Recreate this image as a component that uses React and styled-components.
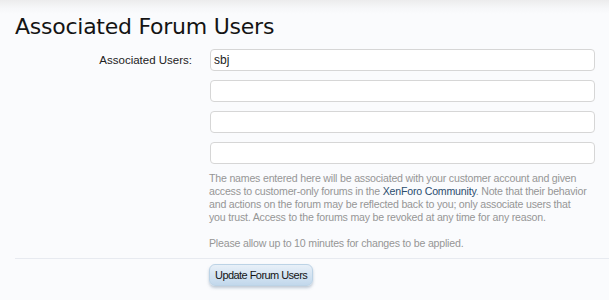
import React from "react";
import styled, { createGlobalStyle } from "styled-components";

const GlobalStyle = createGlobalStyle`
  html, body {
    margin: 0;
    padding: 0;
    background: #fafbfd;
  }
  body {
    font-family: "Liberation Sans", Arial, sans-serif;
    color: #141414;
  }
`;

const App = () => {
  const users = ["sbj", "", "", ""];
  return (
    <Page>
      <GlobalStyle />
      <TitleBar>
        <Title>Associated Forum Users</Title>
      </TitleBar>
      <Form>
        <FieldRow>
          <Label>Associated Users:</Label>
          <Controls>
            {users.map((u, i) => (
              <TextBox key={i} defaultValue={u} />
            ))}
            <Explain>
              <p>
                The names entered here will be associated with your customer account and given
                <br />
                access to customer-only forums in the <Link href="#">XenForo Community</Link>. Note
                that their behavior
                <br />
                and actions on the forum may be reflected back to you; only associate users that
                <br />
                you trust. Access to the forums may be revoked at any time for any reason.
              </p>
              <p>Please allow up to 10 minutes for changes to be applied.</p>
            </Explain>
          </Controls>
        </FieldRow>
        <SubmitRow>
          <Spacer />
          <Button type="button">Update Forum Users</Button>
        </SubmitRow>
      </Form>
    </Page>
  );
};

export default App;

const Page = styled.div`
  width: 609px;
  height: 300px;
  overflow: hidden;
  background: linear-gradient(#ececed 0, #f6f7f9 8px, #fafbfd 14px);
`;
const TitleBar = styled.div`
  padding: 14px 15px 0;
  height: 30px;
`;
const Title = styled.h1`
  margin: 0;
  font-family: "DejaVu Sans", Verdana, sans-serif;
  font-weight: normal;
  font-size: 22px;
  letter-spacing: -0.25px;
  color: #141414;
  line-height: 26px;
`;
const Form = styled.form`
  padding-top: 5px;
`;
const FieldRow = styled.div`
  display: flex;
`;
const Label = styled.div`
  flex-shrink: 0;
  width: 195px;
  padding-right: 3px;
  box-sizing: border-box;
  text-align: right;
  font-size: 11.5px;
  color: #222;
  line-height: 22px;
`;
const Controls = styled.div`
  flex-shrink: 0;
  margin-left: 15px;
  width: 385px;
  display: flex;
  flex-direction: column;
  gap: 9px;
`;
const TextBox = styled.input`
  box-sizing: border-box;
  width: 385px;
  height: 22px;
  border: 1px solid #d6d6d6;
  border-radius: 4px;
  background: #fff;
  padding: 0 3px;
  font-family: "Liberation Sans", Arial, sans-serif;
  font-size: 12px;
  color: #222;
  outline: none;
`;
const Explain = styled.div`
  margin-left: -1px;
  margin-top: -1px;
  font-size: 10.6px;
  letter-spacing: -0.2px;
  line-height: 13px;
  color: #969696;
  white-space: nowrap;
  & > p {
    margin: 0 0 13px;
  }
  & > p:last-child {
    margin-bottom: 8px;
  }
`;
const Link = styled.a`
  color: #2b4d6f;
  text-decoration: none;
`;
const SubmitRow = styled.div`
  display: flex;
  margin-left: 15px;
  border-top: 1px solid #e7eaf0;
  padding-top: 5px;
`;
const Spacer = styled.div`
  flex-shrink: 0;
  width: 194px;
`;
const Button = styled.button`
  height: 22px;
  padding: 0 5px;
  border: 1px solid #bcd3e6;
  border-radius: 6px;
  background: linear-gradient(#e8f0f8, #c2d8ec);
  box-shadow: 0 2px 3px rgba(80, 110, 140, 0.35);
  font-family: "Liberation Sans", Arial, sans-serif;
  font-size: 11px;
  letter-spacing: -0.55px;
  color: #141414;
  cursor: pointer;
`;
